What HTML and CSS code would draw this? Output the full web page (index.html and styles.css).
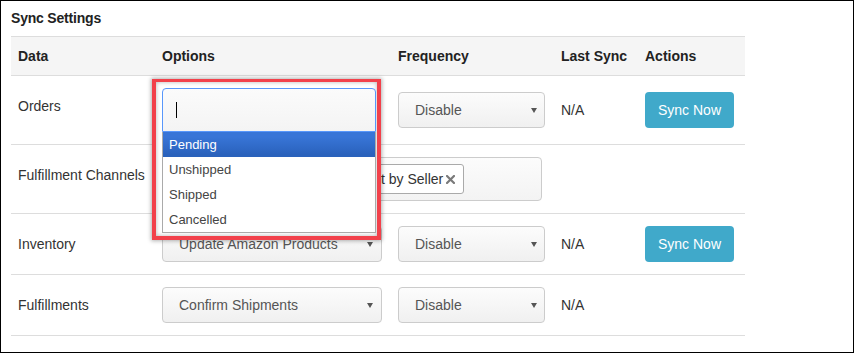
FILE: index.html
```html
<!DOCTYPE html>
<html>
<head>
<meta charset="utf-8">
<link rel="stylesheet" href="styles.css">
</head>
<body>
<div class="frame">
  <div class="title">Sync Settings</div>
  <div class="table">
    <div class="row head">
      <div class="c">Data</div>
      <div class="c">Options</div>
      <div class="c">Frequency</div>
      <div class="c">Last Sync</div>
      <div class="c">Actions</div>
    </div>
    <div class="row">
      <div class="c c1">Orders</div>
      <div class="c">
        <div class="chosen">
          <div class="callout"></div>
          <div class="chosen-input"><span class="cursor"></span></div>
          <ul class="chosen-list">
            <li class="hl">Pending</li>
            <li>Unshipped</li>
            <li>Shipped</li>
            <li>Cancelled</li>
          </ul>
        </div>
      </div>
      <div class="c"><div class="select freq">Disable</div></div>
      <div class="c">N/A</div>
      <div class="c"><div class="btn">Sync Now</div></div>
    </div>
    <div class="row">
      <div class="c c1">Fulfillment Channels</div>
      <div class="c span2">
        <div class="multi">
          <span class="tag">Amazon Fulfillment<svg class="x" width="9" height="9" viewBox="0 0 9 9"><path d="M1 1L8 8M8 1L1 8" stroke="#7a7a7a" stroke-width="2.2" stroke-linecap="square"/></svg></span>
          <span class="tag">Fulfillment by Seller<svg class="x" width="9" height="9" viewBox="0 0 9 9"><path d="M1 1L8 8M8 1L1 8" stroke="#7a7a7a" stroke-width="2.2" stroke-linecap="square"/></svg></span>
        </div>
      </div>
      <div class="c"></div>
      <div class="c"></div>
    </div>
    <div class="row">
      <div class="c c1">Inventory</div>
      <div class="c"><div class="select opt">Update Amazon Products</div></div>
      <div class="c"><div class="select freq">Disable</div></div>
      <div class="c">N/A</div>
      <div class="c"><div class="btn">Sync Now</div></div>
    </div>
    <div class="row">
      <div class="c c1">Fulfillments</div>
      <div class="c"><div class="select opt">Confirm Shipments</div></div>
      <div class="c"><div class="select freq">Disable</div></div>
      <div class="c">N/A</div>
      <div class="c"></div>
    </div>
  </div>
</div>
</body>
</html>
```
FILE: styles.css
```css
html, body {
  margin: 0;
  padding: 0;
  background: #fff;
}
body {
  font-family: "Liberation Sans", Arial, sans-serif;
  font-size: 14px;
  color: #333;
}
.frame {
  width: 854px;
  height: 353px;
  box-sizing: border-box;
  border: 1px solid #000;
  background: #fff;
}
.title {
  padding: 8px 0 0 10px;
  line-height: 18px;
  height: 18px;
  margin-bottom: 9px;
  font-weight: bold;
  letter-spacing: -0.2px;
  color: #222;
}
.table {
  margin-left: 10px;
  width: 734px;
}
.row {
  display: grid;
  grid-template-columns: 144px 236px 163px 84px 107px;
  align-items: center;
  padding: 12px 0;
  border-bottom: 1px solid #ddd;
}
.row.head {
  padding: 0;
  height: 38px;
  border-top: 1px solid #ddd;
  background: #f5f5f5;
  font-weight: bold;
  color: #222;
}
.c {
  padding-left: 7px;
  min-width: 0;
  white-space: nowrap;
}
.c1 {
  align-self: start;
  line-height: 36px;
}
.span2 {
  grid-column: span 2;
}
.select {
  position: relative;
  box-sizing: border-box;
  height: 36px;
  border: 1px solid #ccc;
  border-radius: 4px;
  background: linear-gradient(#fcfcfc, #f0f0f0);
  display: flex;
  align-items: center;
  padding-left: 16px;
  color: #555;
}
.select::after {
  content: "";
  position: absolute;
  right: 8px;
  top: 15px;
  border-left: 3px solid transparent;
  border-right: 3px solid transparent;
  border-top: 5px solid #555;
}
.opt { width: 220px; }
.freq { width: 147px; }
.freq::after { right: 7px; }
.btn {
  width: 89px;
  height: 36px;
  border-radius: 4px;
  background: #40a9ca;
  color: #fff;
  display: flex;
  align-items: center;
  justify-content: center;
}
.multi {
  box-sizing: border-box;
  width: 380px;
  height: 44px;
  border: 1px solid #ccc;
  border-radius: 4px;
  background: linear-gradient(#fcfcfc, #f3f3f3);
  display: flex;
  align-items: center;
  gap: 3px;
  padding-left: 3px;
}
.tag {
  box-sizing: border-box;
  height: 30px;
  display: inline-flex;
  align-items: center;
  border: 1px solid #aaa;
  border-radius: 3px;
  background: #fff;
  padding: 0 8px 0 5px;
  color: #333;
}
.x {
  margin-left: 3px;
  display: block;
}
.chosen {
  position: relative;
  z-index: 5;
  width: 214px;
  height: 44px;
}
.callout {
  position: absolute;
  left: -10px;
  top: -9px;
  width: 229px;
  height: 161px;
  box-sizing: border-box;
  border: 4px solid #f2414b;
  border-top-width: 3px;
  background: #fff;
  box-shadow: 0 0 4px 1px rgba(0,0,0,0.3), inset 0 0 4px rgba(0,0,0,0.3);
  z-index: -1;
}
.chosen-input {
  box-sizing: border-box;
  width: 214px;
  height: 44px;
  border: 1px solid #5897fb;
  border-radius: 4px 4px 0 0;
  background: linear-gradient(#fbfbfb, #f4f4f4);
  display: flex;
  align-items: center;
  padding-left: 13px;
}
.cursor {
  width: 1px;
  height: 16px;
  background: #000;
}
.chosen-list {
  position: absolute;
  left: 0;
  top: 44px;
  width: 214px;
  box-sizing: border-box;
  margin: 0;
  padding: 0;
  list-style: none;
  background: #fff;
  border: 1px solid #aaa;
  border-top: 0;
  font-size: 13px;
  color: #444;
}
.chosen-list li {
  line-height: 25px;
  padding-left: 6px;
}
.chosen-list li.hl {
  background: linear-gradient(#3875d7 20%, #2a62bc 90%);
  color: #fff;
}
```
